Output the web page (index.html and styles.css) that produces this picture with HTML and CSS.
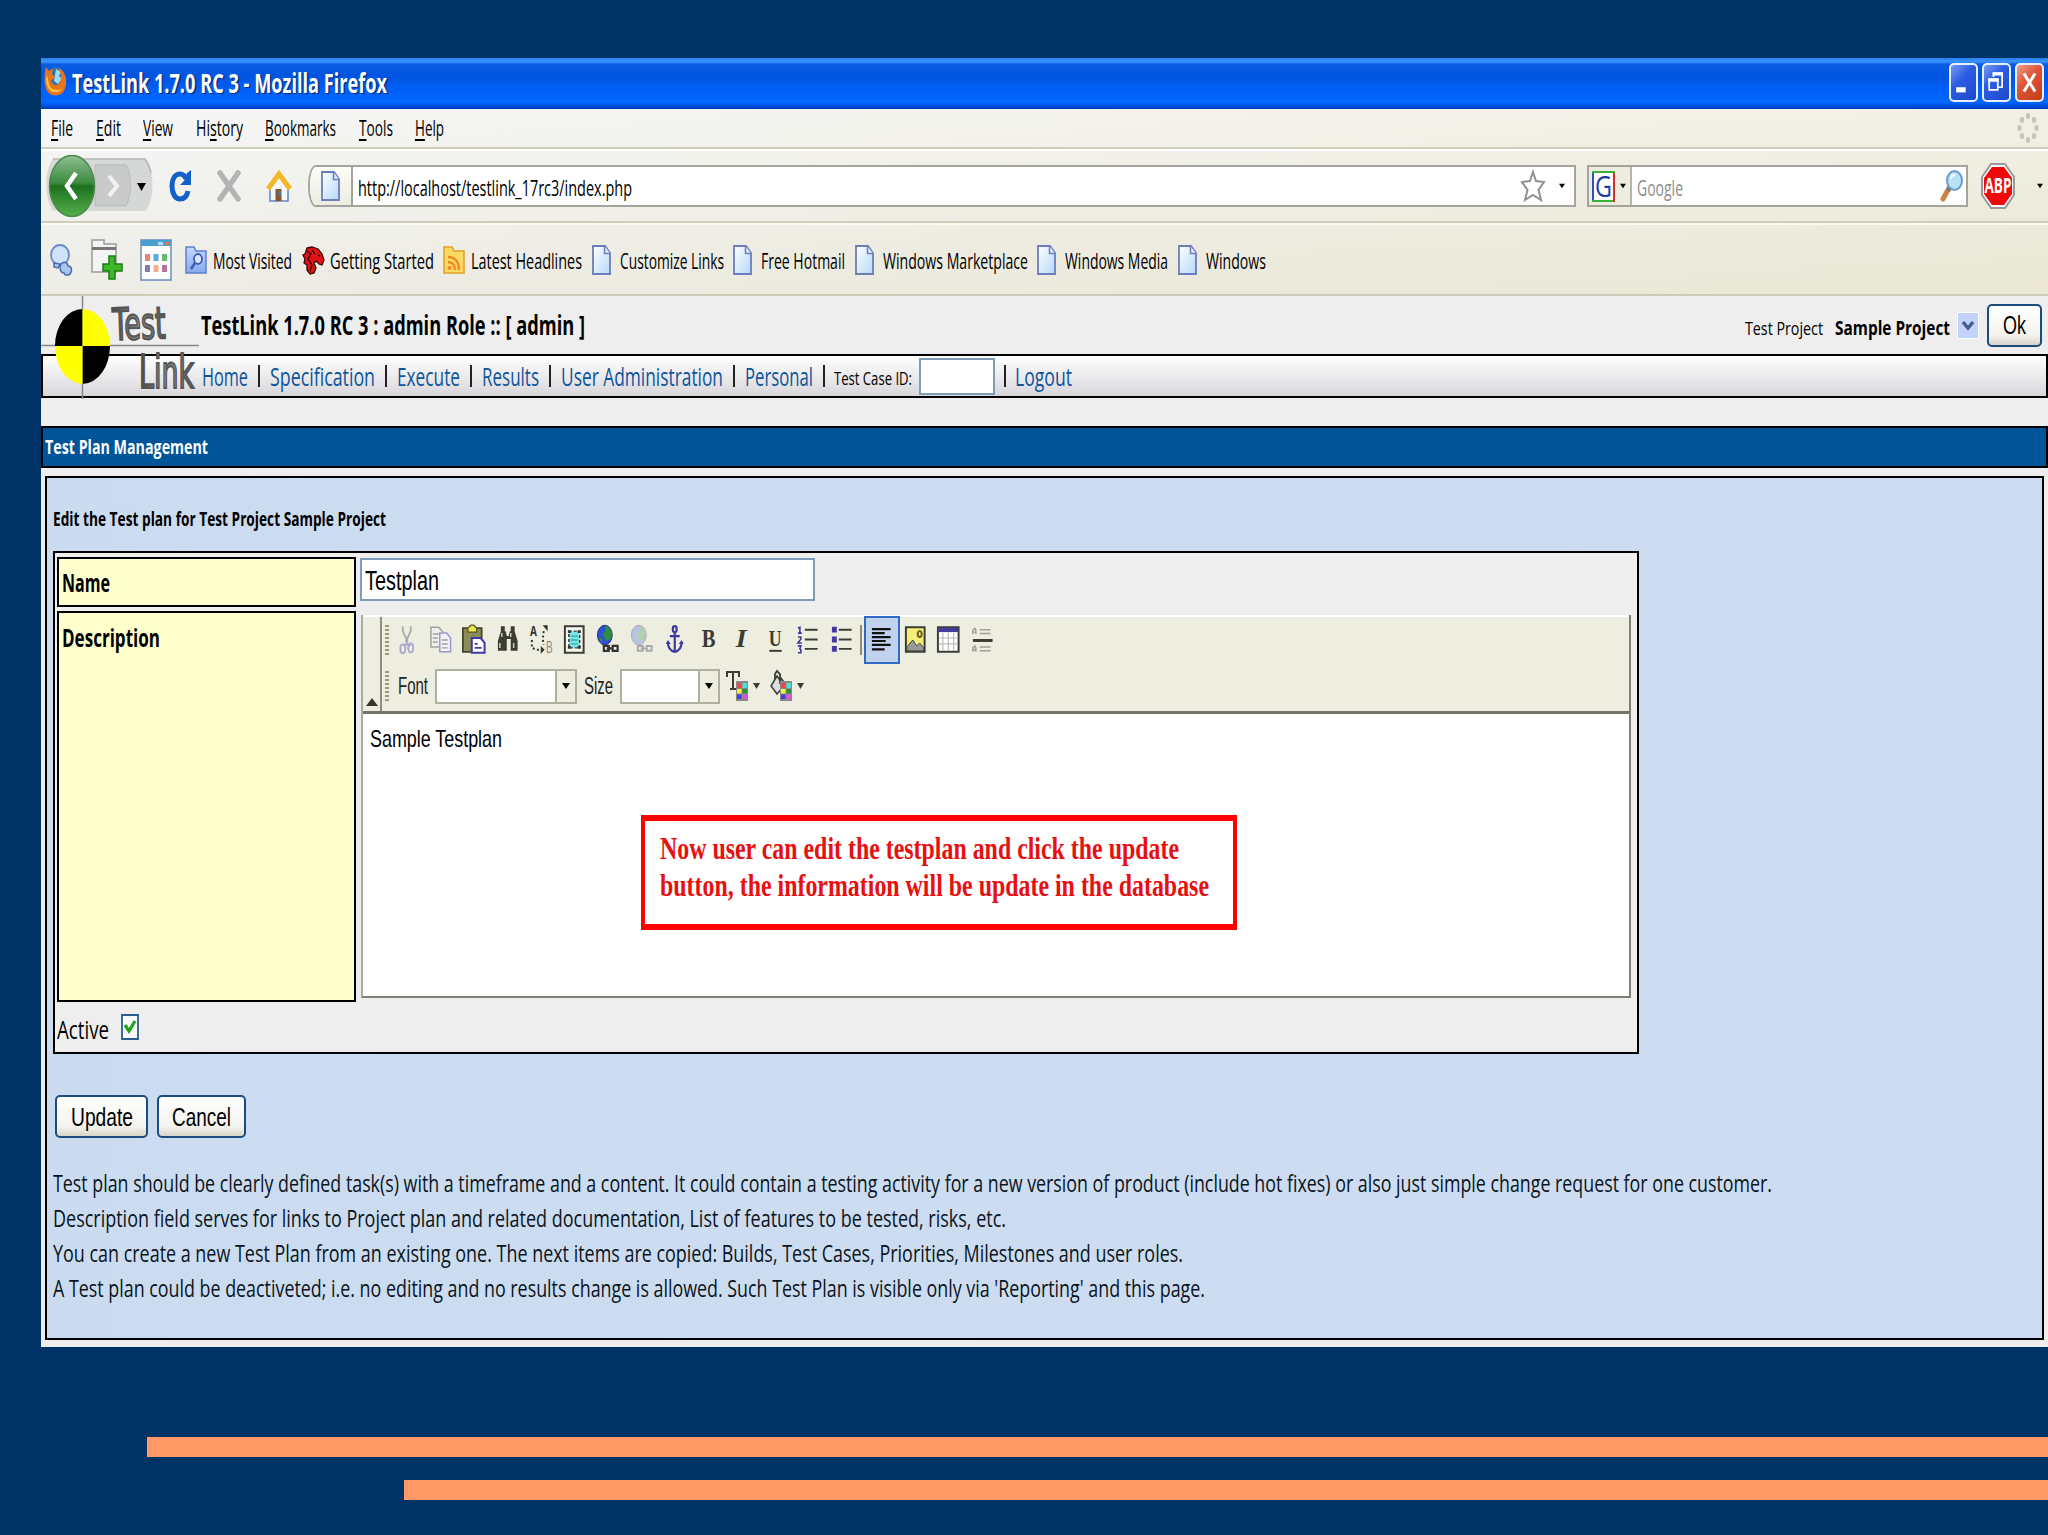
FILE: index.html
```
<!DOCTYPE html>
<html lang="en">
<head>
    <meta charset="utf-8">
    <title>TestLink 1.7.0 RC 3</title>
    <link rel="stylesheet" href="styles.css">
</head>
<body>
    <svg class="defs" width="0" height="0">
        <defs>
            <linearGradient id="paper" x1="0" y1="0" x2="1" y2="1">
                <stop offset="0" stop-color="#fff"/><stop offset="1" stop-color="#b4d8fb"/>
            </linearGradient>
            <linearGradient id="green" x1="0" y1="0" x2="0" y2="1">
                <stop offset="0" stop-color="#8fbf92"/><stop offset=".45" stop-color="#3c8a3f"/><stop offset=".5" stop-color="#1d701f"/><stop offset="1" stop-color="#55b04c"/>
            </linearGradient>
            <linearGradient id="folder" x1="0" y1="0" x2="0" y2="1">
                <stop offset="0" stop-color="#c4d8fb"/><stop offset="1" stop-color="#86a9ee"/>
            </linearGradient>
            <linearGradient id="steel" x1="0" y1="0" x2="1" y2="0">
                <stop offset="0" stop-color="#444"/><stop offset=".5" stop-color="#8a8a8a"/><stop offset="1" stop-color="#555"/>
            </linearGradient>
        </defs>
        <symbol id="page" viewBox="0 0 19 30">
            <path d="M1 1h12l5 7v21H1z" fill="url(#paper)" stroke="#6c7cbc" stroke-width="1.8"/>
            <path d="M12.500 1v7.500H18" fill="#dcebff" stroke="#6c7cbc" stroke-width="1.500"/>
        </symbol>
        <symbol id="palette" viewBox="0 0 12 20">
            <path d="M0 0h12v20H0z" fill="#888"/>
            <path d="M1 2h4.500v5H1z" fill="#e84848"/><path d="M6.500 2H11v5H6.500z" fill="#50dcd8"/>
            <path d="M1 8h4.500v4.500H1z" fill="#f8f040"/><path d="M6.500 8H11v4.500H6.500z" fill="#289038"/>
            <path d="M1 13.500h4.500V18H1z" fill="#4040d8"/><path d="M6.500 13.500H11V18H6.500z" fill="#e050d8"/>
        </symbol>
        <symbol id="down" viewBox="0 0 8 6"><path d="M0 0h8L4 6z"/></symbol>
    </svg>

    <div class="window">
        <div class="titlebar">
            <svg class="firefox" width="23" height="30" viewBox="0 0 23 30">
                <ellipse cx="12" cy="14" rx="10" ry="13" fill="#2b6fb4"/>
                <path d="M12 3l5 3-2 4 3 3-4 5-4-3z" fill="#9adcf0"/>
                <path d="M2 1l3 4 4-2-1 5 3 3-4 4c2 5 7 5 9 1 2-4 1-10-2-14 9 3 10 16 6 23-4 6-13 6-17 0C0 19 0 8 2 1z" fill="#e8741c"/>
                <path d="M3 9c-2 6 0 13 4 16 4 2 8 2 11-2-5 2-12 1-13-5z" fill="#f9c440"/>
            </svg>
            <span class="fit title" data-w="315">TestLink 1.7.0 RC 3 - Mozilla Firefox</span>
            <div class="controls">
                <svg class="ctl" viewBox="0 0 29 39"><path d="M6 25h11v6H6z" fill="#fff"/></svg>
                <svg class="ctl" viewBox="0 0 29 39"><path d="M11 13V9h10v16h-4M6 16h10v12H6z" fill="none" stroke="#fff" stroke-width="2"/><path d="M10 9.500h12M5 16.500h12" stroke="#fff" stroke-width="4"/></svg>
                <svg class="ctl close" viewBox="0 0 29 39"><path d="M8 9l13 21M21 9L8 30" stroke="#fff" stroke-width="3.500"/></svg>
            </div>
        </div>

        <div class="chrome">
            <div class="menubar">
                <span class="fit" data-w="22"><u>F</u>ile</span>
                <span class="fit" data-w="25"><u>E</u>dit</span>
                <span class="fit" data-w="30"><u>V</u>iew</span>
                <span class="fit" data-w="47">Hi<u>s</u>tory</span>
                <span class="fit" data-w="71"><u>B</u>ookmarks</span>
                <span class="fit" data-w="34"><u>T</u>ools</span>
                <span class="fit" data-w="29"><u>H</u>elp</span>
                <svg class="throbber" width="22" height="30" viewBox="0 0 22 30" fill="#c6c4b6">
                    <ellipse cx="11" cy="3" rx="2.200" ry="3"/><ellipse cx="17" cy="7" rx="2.200" ry="3"/><ellipse cx="19.500" cy="15" rx="2.200" ry="3"/><ellipse cx="17" cy="23" rx="2.200" ry="3"/>
                    <ellipse cx="11" cy="27" rx="2.200" ry="3"/><ellipse cx="5" cy="23" rx="2.200" ry="3"/><ellipse cx="2.500" cy="15" rx="2.200" ry="3"/><ellipse cx="5" cy="7" rx="2.200" ry="3"/>
                </svg>
            </div>

            <div class="navbar">
                <svg class="backforward" width="108" height="64" viewBox="0 0 108 64">
                    <path d="M8 5h92c10 12 10 42 0 52H8C-1 44-1 16 8 5z" fill="#d6d8d8"/>
                    <path d="M8 5h92c3 4 5 9 6 14" fill="none" stroke="#b4b6b6" stroke-width="1.500"/>
                    <path d="M50 11h31c6 10 6 31 0 41H50z" fill="#c9cbcb" stroke="#b8baba"/>
                    <path d="M64 22l8 10-8 10" fill="none" stroke="#f2f2f2" stroke-width="4"/>
                    <ellipse cx="27" cy="32" rx="22.500" ry="30.500" fill="url(#green)" stroke="#4c8a4e" stroke-width="1.500"/>
                    <path d="M31 19L22 32l9 13" fill="none" stroke="#fff" stroke-width="4.500"/>
                    <path d="M92 29h9l-4.500 8z" fill="#000"/>
                </svg>
                <svg width="23" height="32" viewBox="0 0 23 32">
                    <path d="M19 21c-1 5-4 8-8 8-5 0-8-6-8-13S6 4 11 4c3 0 5 2 6 5" fill="none" stroke="#1560c8" stroke-width="5"/>
                    <path d="M22 0v15H11l4-4 3-8z" fill="#1560c8"/>
                </svg>
                <svg width="24" height="32" viewBox="0 0 24 32"><path d="M3 3l18 26M21 3L3 29" stroke="#b4b4b4" stroke-width="5.500" stroke-linecap="round"/></svg>
                <svg width="26" height="32" viewBox="0 0 26 32">
                    <path d="M4 16v15h18V16l-9-11z" fill="#f4f8fd" stroke="#5f86c4" stroke-width="1.500"/>
                    <path d="M9.500 19h6v12h-6z" fill="#8a5424"/><path d="M12 21h3v5h-3z" fill="#57738e"/>
                    <path d="M2 19L13 4l11 15" fill="none" stroke="#f4b728" stroke-width="5"/>
                </svg>
                <div class="urlbar">
                    <div class="favicon"><svg width="19" height="30"><use href="#page"/></svg></div>
                    <span class="fit url" data-w="274">http://localhost/testlink_17rc3/index.php</span>
                    <svg class="star" width="24" height="32" viewBox="0 0 24 32"><path d="M12 2l3 9 8 1-5.500 8L20 30l-8-5-8 5 2.500-10L1 12l8-1z" fill="#fff" stroke="#909090" stroke-width="2"/></svg>
                    <svg width="6" height="6"><use href="#down"/></svg>
                </div>
                <div class="search">
                    <div class="engine">
                        <svg width="23" height="31" viewBox="0 0 23 31">
                            <path d="M0 0h23v31H0z" fill="#fff"/><path d="M0 1h23M0 30h22" stroke="#3cb03c" stroke-width="2"/>
                            <path d="M1 2v27" stroke="#2a50c8" stroke-width="2"/><path d="M22 2v29" stroke="#d82c2c" stroke-width="2"/>
                            <text x="3" y="26" font-size="29" textLength="17" lengthAdjust="spacingAndGlyphs" fill="#1c3ca8">G</text>
                        </svg>
                        <svg width="6" height="6"><use href="#down"/></svg>
                    </div>
                    <span class="fit hint" data-w="46">Google</span>
                    <svg class="lens" width="23" height="32" viewBox="0 0 23 32">
                        <path d="M9 18L3 29" stroke="#c8853c" stroke-width="5" stroke-linecap="round"/>
                        <path d="M10 17l-2 4" stroke="#777" stroke-width="4"/>
                        <ellipse cx="14.500" cy="10.500" rx="7.500" ry="9.500" fill="#b8e2f8" stroke="#6a9cd0" stroke-width="2"/>
                        <path d="M11 9c0-3 2-4 4-4" stroke="#fff" stroke-width="2" fill="none"/>
                    </svg>
                </div>
                <svg class="abp" width="34" height="46" viewBox="0 0 34 46">
                    <path d="M10 1h14l9 13v18l-9 13H10L1 32V14z" fill="#fff" stroke="#999" stroke-width="2"/>
                    <path d="M11 4h12l8 11v16l-8 11H11L3 31V15z" fill="#ee0a0a"/>
                    <text x="3.500" y="30" font-size="21" font-weight="700" textLength="27" lengthAdjust="spacingAndGlyphs" fill="#fff">ABP</text>
                </svg>
                <svg class="more" width="6" height="6"><use href="#down"/></svg>
            </div>

            <div class="bookmarks">
                <svg width="23" height="32" viewBox="0 0 23 32">
                    <ellipse cx="11" cy="11" rx="9" ry="10" fill="#cfe2fb" stroke="#6a8cc4" stroke-width="1.800"/>
                    <path d="M5 19l6 1-2 4-4-1zM12 20c4-4 7 0 7 2 4 0 4 5 3 6-1 4-6 4-7 1-4 0-5-6-3-9z" fill="#a8c6f2" stroke="#4a6cac" stroke-width="1.500"/>
                </svg>
                <svg class="newtab" width="32" height="42" viewBox="0 0 32 42">
                    <path d="M1 9V1h12v4h12v28H1z" fill="#f4f4f4" stroke="#999" stroke-width="1.500"/>
                    <path d="M1 8h24v3H1z" fill="#777"/>
                    <path d="M18 17h6v8h7v7h-7v8h-6v-8h-6v-7h6z" fill="#3cb828" stroke="#1c7c14" stroke-width="1.500"/>
                </svg>
                <svg class="speed" width="32" height="42" viewBox="0 0 32 42">
                    <path d="M1 1h30v40H1z" fill="#fff" stroke="#6a8cc0" stroke-width="1.500"/><path d="M1 1h30v6H1z" fill="#48a0d0"/>
                    <path d="M25 3h4v3h-4z" fill="#e87050"/><path d="M18 3h5v3h-5z" fill="#b8dcf0"/>
                    <path d="M5 15h5v7H5z" fill="#f08078"/><path d="M13.500 15h5v7h-5z" fill="#60a8e0"/><path d="M22 15h5v7h-5z" fill="#68b870"/>
                    <path d="M5 26h5v7H5z" fill="#8878b0"/><path d="M13.500 26h5v7h-5z" fill="#f4b08c"/><path d="M22 26h5v7h-5z" fill="#b870a0"/>
                </svg>
                <a class="bookmark">
                    <svg width="22" height="28" viewBox="0 0 22 28">
                        <path d="M1 1h8l2 4h10v22H1z" fill="url(#folder)" stroke="#5c80d0" stroke-width="1.500"/>
                        <ellipse cx="13" cy="13" rx="4" ry="5" fill="#dce8ff" stroke="#3c5cb4" stroke-width="1.800"/><path d="M10 17l-4 6" stroke="#3c5cb4" stroke-width="2.500"/>
                    </svg>
                    <span class="fit" data-w="79">Most Visited</span>
                </a>
                <a class="bookmark">
                    <svg width="22" height="28" viewBox="0 0 22 28">
                        <path d="M5 2l5-1 6 2 4 5 2 6-2 5-3-1-3-3-2 2 2 5-2 5-4 1-3-4 0-5-3-2 1-4-2-4 2-1z" fill="#e01414" stroke="#3c0606" stroke-width="1.300"/>
                        <path d="M5 5l4 3-3 5 4 6-2 6M10 4l3 4M16 9l2 1" stroke="#500" fill="none" stroke-width="1.500"/>
                    </svg>
                    <span class="fit" data-w="104">Getting Started</span>
                </a>
                <a class="bookmark">
                    <svg width="22" height="28" viewBox="0 0 22 28">
                        <path d="M1 1h8l2 4h10v22H1z" fill="#fcd864" stroke="#e0a020" stroke-width="1.500"/>
                        <path d="M5 11c7 0 11 5 11 13M5 16c4 0 7 3 7 8" fill="none" stroke="#ee8a1c" stroke-width="2.500"/><circle cx="6.500" cy="22" r="2" fill="#ee8a1c"/>
                    </svg>
                    <span class="fit" data-w="111">Latest Headlines</span>
                </a>
                <a class="bookmark page"><svg width="19" height="30"><use href="#page"/></svg><span class="fit" data-w="104">Customize Links</span></a>
                <a class="bookmark page"><svg width="19" height="30"><use href="#page"/></svg><span class="fit" data-w="84">Free Hotmail</span></a>
                <a class="bookmark page"><svg width="19" height="30"><use href="#page"/></svg><span class="fit" data-w="145">Windows Marketplace</span></a>
                <a class="bookmark page"><svg width="19" height="30"><use href="#page"/></svg><span class="fit" data-w="103">Windows Media</span></a>
                <a class="bookmark page"><svg width="19" height="30"><use href="#page"/></svg><span class="fit" data-w="60">Windows</span></a>
            </div>
        </div>

        <div class="content">
            <svg class="logo" width="160" height="103" viewBox="0 0 160 103">
                <path d="M41.500 0v103M0 49.500h158" stroke="#888" stroke-width="1.500"/>
                <path d="M41.500 50V13A27.500 37 0 0 0 14 50zM41.500 50v38A27.500 38 0 0 0 69 50z" fill="#000"/>
                <path d="M41.500 50V13A27.500 37 0 0 1 69 50zM41.500 50v38A27.500 38 0 0 1 14 50z" fill="#ff0"/>
                <text x="72" y="44" font-size="44" textLength="53" lengthAdjust="spacingAndGlyphs" transform="rotate(-2 72 44)">Test</text>
                <text x="98" y="92" font-size="46" textLength="55" lengthAdjust="spacingAndGlyphs">Link</text>
            </svg>
            <div class="header">
                <span class="fit product" data-w="384">TestLink 1.7.0 RC 3 : admin Role :: [ admin ]</span>
                <div class="project">
                    <span class="fit" data-w="78">Test Project</span>
                    <span class="fit current" data-w="115">Sample Project</span>
                    <svg width="22" height="27" viewBox="0 0 22 27"><path d="M0 0h22v27H0z" fill="#fff"/><path d="M1 1h20v25H1z" fill="#c2d2fa"/><path d="M6 10l5 6 5-6" fill="none" stroke="#44608c" stroke-width="3.500"/></svg>
                    <button class="btn ok"><span class="fit" data-w="23">Ok</span></button>
                </div>
            </div>
            <div class="menu">
                <a class="fit" data-w="46">Home</a><i></i>
                <a class="fit" data-w="105">Specification</a><i></i>
                <a class="fit" data-w="63">Execute</a><i></i>
                <a class="fit" data-w="57">Results</a><i></i>
                <a class="fit" data-w="162">User Administration</a><i></i>
                <a class="fit" data-w="68">Personal</a><i></i>
                <span class="fit small" data-w="78">Test Case ID:</span>
                <div class="tcid"></div><i></i>
                <a class="fit" data-w="57">Logout</a>
            </div>

            <h1><span class="fit" data-w="163">Test Plan Management</span></h1>

            <div class="workback">
                <h2><span class="fit" data-w="333">Edit the Test plan for Test Project Sample Project</span></h2>
                <div class="form">
                    <div class="th name"><span class="fit" data-w="48">Name</span></div>
                    <div class="field"><span class="fit" data-w="74">Testplan</span></div>
                    <div class="th desc"><span class="fit" data-w="98">Description</span></div>
                    <div class="editor">
                        <div class="toolbar">
                            <div class="collapse"><svg width="12" height="8" viewBox="0 0 12 8"><path d="M6 0l6 8H0z" fill="#3a3428"/></svg></div>
                            <div class="tools">
                                <div class="toolrow first">
                                    <b class="grip"></b>
                                    <svg class="tool" viewBox="0 0 34 46"><g fill="none" stroke="#a8a8a8" stroke-width="1.800"><path d="M13 9v5l5 11M21 9v5l-5 11"/><g stroke="#a8a4cc"><path d="M17 22v5l-3 2M17 27l4 2"/><ellipse cx="13" cy="32" rx="2.500" ry="4.500"/><ellipse cx="21" cy="31" rx="2.500" ry="4.500"/></g></g></svg>
                                    <svg class="tool" viewBox="0 0 34 46"><path d="M7 10h8l4 5v15H7z" fill="#eee" stroke="#a0a0a0" stroke-width="1.500"/><path d="M9 17h6M9 21h5M9 25h5" stroke="#a0a0a0" stroke-width="1.500"/><path d="M16 16h7l4 5v14H16z" fill="#f2f2fa" stroke="#9c98cc" stroke-width="1.500"/><path d="M18 23h6M18 27h6M18 31h6" stroke="#a0a0a0" stroke-width="1.500"/></svg>
                                    <svg class="tool" viewBox="0 0 34 46"><path d="M6 11h19v24H6z" fill="#8c8c58" stroke="#44442c" stroke-width="1.800"/><path d="M11 15v-4l3-3h3l3 3v4z" fill="#e8e848" stroke="#555520" stroke-width="1.300"/><path d="M15 21h9l4 5v10H15z" fill="#fff" stroke="#4038a0" stroke-width="2"/><path d="M18 27h3M18 31h7" stroke="#4038a0" stroke-width="1.800"/></svg>
                                    <svg class="tool" viewBox="0 0 34 46"><path d="M10 9h4v5h1l1 5h2l1-5h1V9h4v5l3 10v10h-7V22h-4v12H7V24l3-10z" fill="#3c3c32"/><path d="M11 16v4M9 26v5M20 16v4M23 26v5" stroke="#ccc" stroke-width="1.500"/></svg>
                                    <svg class="tool" viewBox="0 0 34 46"><text x="6" y="19" font-size="15" font-weight="700" textLength="7" lengthAdjust="spacingAndGlyphs" fill="#333">A</text><text x="22" y="36" font-size="17" textLength="7" lengthAdjust="spacingAndGlyphs" fill="#888">B</text><path d="M8 23v8l5 2h3M20 14l-1 8 1 6" stroke="#333" stroke-width="2" stroke-dasharray="2 2.500" fill="none"/><path d="M17 29l4 4-4 4zM19 8h5v6z" fill="#333"/></svg>
                                    <svg class="tool" viewBox="0 0 34 46"><path d="M7 9h19v27H7z" fill="#f8f8f0" stroke="#3c3c34" stroke-width="2"/><path d="M11 14h11v17H11z" fill="#7ce4e4" stroke="#3c3c34" stroke-width="1.500" stroke-dasharray="3 2"/><path d="M10 13h3v3h-3zM20 13h3v3h-3zM10 29h3v3h-3zM20 29h3v3h-3z" fill="#333"/><path d="M13 19h7M13 23h7M13 27h7" stroke="#3aa" stroke-width="1.300"/></svg>
                                    <svg class="tool" viewBox="0 0 34 46"><ellipse cx="14" cy="18" rx="7.500" ry="10" fill="#2c50d8" stroke="#336" stroke-width="1"/><path d="M14 9c7 0 8 8 6 13l-5 2-3-7 3-4zM8 20l4 2-1 4z" fill="#2c9040"/><path d="M13 29h5v5h-5zM22 29h5v5h-5zM16 31.500h7" fill="#eee" stroke="#333" stroke-width="2.200"/></svg>
                                    <svg class="tool" viewBox="0 0 34 46"><ellipse cx="14" cy="18" rx="7.500" ry="10" fill="#b8c4e4" stroke="#aab" stroke-width="1"/><path d="M14 9c7 0 8 8 6 13l-5 2-3-7 3-4zM8 20l4 2-1 4z" fill="#b4d0b0"/><path d="M13 29h5v5h-5zM22 29h5v5h-5zM16 31.500h7" fill="#eee" stroke="#aaa" stroke-width="2"/></svg>
                                    <svg class="tool" viewBox="0 0 34 46"><g fill="none" stroke="#3c38a0" stroke-width="2.200"><ellipse cx="17" cy="12" rx="2" ry="3"/><path d="M17 15v20M12 19h10M10 25c0 6 3 9 7 10 4-1 7-4 7-10"/></g><path d="M8 27l2-4 3 4zM21 27l3-4 2 4z" fill="#3c38a0"/></svg>
                                    <svg class="tool" viewBox="0 0 34 46"><text class="serif" x="10" y="30" font-size="26" font-weight="700" textLength="14" lengthAdjust="spacingAndGlyphs">B</text></svg>
                                    <svg class="tool" viewBox="0 0 34 46"><text class="serif" x="11" y="30" font-size="26" font-weight="700" font-style="italic" textLength="11" lengthAdjust="spacingAndGlyphs">I</text></svg>
                                    <svg class="tool" viewBox="0 0 34 46"><text class="serif" x="10" y="29" font-size="24" font-weight="700" textLength="13" lengthAdjust="spacingAndGlyphs">U</text><path d="M10.500 34h12.500" stroke="#3c3c34" stroke-width="2"/></svg>
                                    <svg class="tool" viewBox="0 0 34 46"><path d="M13 12.500h13M13 22.500h13M13 32h13" stroke="#3c3c34" stroke-width="2"/><path d="M6 11l2-1v6M6 16h4M6 20h3v2l-3 4h4M6 29h3l-1 3 1 1v3H6" fill="none" stroke="#3c38a0" stroke-width="1.600"/></svg>
                                    <svg class="tool" viewBox="0 0 34 46"><path d="M13 12.500h13M13 22.500h13M13 32h13" stroke="#3c3c34" stroke-width="2"/><path d="M6 9.500h5v6H6zM6 19.500h5v6H6zM6 29h5v6H6z" fill="#4438a4"/></svg>
                                    <b class="sep"></b>
                                    <svg class="tool on" viewBox="0 0 34 46"><path d="M7 12h19M7 16h13M7 20h19M7 24h14M7 28h19M7 32.500h13" stroke="#111" stroke-width="2.200"/></svg>
                                    <svg class="tool" viewBox="0 0 34 46"><path d="M7 10h19v25H7z" fill="#f4ee78" stroke="#3c3c34" stroke-width="2"/><ellipse cx="21" cy="17" rx="2" ry="3" fill="none" stroke="#666020" stroke-width="2"/><path d="M8 34v-4l6-7 4 6 3-3 4 5v3z" fill="#999" stroke="#444" stroke-width="1"/></svg>
                                    <svg class="tool" viewBox="0 0 34 46"><path d="M6 10h21v25H6z" fill="#fff" stroke="#3c3c34" stroke-width="2"/><path d="M6.500 10.500h20V15h-20z" fill="#443c9c"/><path d="M11 16v18M16.500 16v18M22 16v18M7 21h19M7 27h19" stroke="#bbb" stroke-width="1.200"/></svg>
                                    <svg class="tool" viewBox="0 0 34 46"><path d="M14 12.500h11M14 16.500h11M14 30h11M14 34h11M7 17v-4l2-2 1 2v4M7 15h3M7 35v-4l2-2 1 2v4M7 33h3" fill="none" stroke="#a0a098" stroke-width="1.500"/><path d="M7 23.500h20" stroke="#3c3c34" stroke-width="3"/></svg>
                                </div>
                                <div class="toolrow">
                                    <b class="grip"></b>
                                    <span class="fit label" data-w="30">Font</span>
                                    <div class="combo font"><span><svg width="8" height="6"><use href="#down"/></svg></span></div>
                                    <span class="fit label" data-w="29">Size</span>
                                    <div class="combo size"><span><svg width="8" height="6"><use href="#down"/></svg></span></div>
                                    <svg class="color" width="35" height="32" viewBox="0 0 35 32"><path d="M1 7V2h12v5M7 2v17M4 19h7" fill="none" stroke="#3c3c34" stroke-width="2"/><use href="#palette" x="10" y="11" width="12" height="20"/><path d="M27 13h7l-3.500 6z" fill="#3c3c34"/></svg>
                                    <svg class="color" width="35" height="32" viewBox="0 0 35 32"><path d="M7 6L1 16l6 8 7-8z" fill="#ddd" stroke="#3c3c34" stroke-width="1.500"/><path d="M5 9V4l2-3 3 3v10M10 7l6 8" fill="none" stroke="#3c3c34" stroke-width="1.800"/><use href="#palette" x="10" y="11" width="12" height="20"/><path d="M27 13h7l-3.500 6z" fill="#3c3c34"/></svg>
                                </div>
                            </div>
                        </div>
                        <div class="textarea">
                            <span class="fit" data-w="132">Sample Testplan</span>
                            <div class="callout">
                                <div><span class="fit" data-w="519">Now user can edit the testplan and click the update</span></div>
                                <div><span class="fit" data-w="549">button, the information will be update in the database</span></div>
                            </div>
                        </div>
                    </div>
                    <div class="active">
                        <span class="fit" data-w="52">Active</span>
                        <svg width="18" height="26" viewBox="0 0 18 26"><path d="M1 1h16v24H1z" fill="#f8faf8" stroke="#2c5c8c" stroke-width="1.800"/><path d="M4 11l4 6 6-10" fill="none" stroke="#22a022" stroke-width="3.200"/></svg>
                    </div>
                </div>
                <div class="buttons">
                    <button class="btn update"><span class="fit" data-w="62">Update</span></button>
                    <button class="btn cancel"><span class="fit" data-w="59">Cancel</span></button>
                </div>
                <p>
                    <span class="fit" data-w="1719">Test plan should be clearly defined task(s) with a timeframe and a content. It could contain a testing activity for a new version of product (include hot fixes) or also just simple change request for one customer.</span>
                    <span class="fit" data-w="953">Description field serves for links to Project plan and related documentation, List of features to be tested, risks, etc.</span>
                    <span class="fit" data-w="1130">You can create a new Test Plan from an existing one. The next items are copied: Builds, Test Cases, Priorities, Milestones and user roles.</span>
                    <span class="fit" data-w="1152">A Test plan could be deactiveted; i.e. no editing and no results change is allowed. Such Test Plan is visible only via 'Reporting' and this page.</span>
                </p>
            </div>
        </div>
    </div>

    <div class="stripe"></div>
    <div class="stripe short"></div>

    <script src="fit.js"></script>
</body>
</html>
```

FILE: styles.css
```
* {
    box-sizing: border-box;
}

body {
    margin: 0;
    padding: 58px 0 0 41px;
    height: 1535px;
    overflow: hidden;
    background: #003366;
    font-family: "Open Sans", "Noto Sans", sans-serif;
    color: #000;
}

svg {
    display: block;
    flex: none;
    overflow: visible;
}

.defs {
    position: absolute;
}

/* narrow text, squeezed to the width in data-w */
.fit {
    display: inline-block;
    flex: none;
    white-space: nowrap;
    transform-origin: 0 50%;
}

.window {
    height: 1289px;
    background: #eeeeef;
}

/* title bar */
.titlebar {
    display: flex;
    align-items: center;
    height: 51px;
    padding-left: 3px;
    background: linear-gradient(#2a80f4 0, #3a94ff 4px, #0a5ce4 6px, #0054e0 18px, #0060f8 32px, #0068ff 44px, #0050e0 48px, #0038b8 51px);
}

.firefox {
    margin-bottom: 6px;
}

.title {
    margin: 0 0 2px 5px;
    font-size: 26px;
    font-weight: 700;
    line-height: 30px;
    color: #fff;
    text-shadow: 2px 1px 1px #0a2a80;
}

.controls {
    display: flex;
    gap: 4px;
    margin-left: auto;
    padding: 0 4px 3px 0;
}

.ctl {
    width: 29px;
    height: 39px;
    border: 2px solid #e8eefc;
    border-radius: 5px;
    background: linear-gradient(135deg, #7a9cf4, #2c5ce4 40%, #1c48cc);
}

.ctl.close {
    background: linear-gradient(135deg, #f0a08c, #e0563a 40%, #c43c18);
}

/* browser toolbars */
.chrome {
    height: 187px;
    background: linear-gradient(rgba(255, 255, 255, 0.3), rgba(230, 226, 204, 0.35)), linear-gradient(to right, #f1f2f4, #efeee6 45%, #ecead9);
    border-bottom: 2px solid #cccbb8;
    font-size: 21px;
}

.menubar {
    display: flex;
    align-items: center;
    gap: 22.500px;
    height: 40px;
    padding: 0 9px 0 10px;
    border-bottom: 2px solid #cfcdba;
    line-height: 30px;
}

.menubar u {
    text-decoration-thickness: 1.500px;
    text-underline-offset: 3px;
}

.throbber {
    margin-left: auto;
}

.navbar {
    display: flex;
    align-items: center;
    height: 74px;
    padding: 0 5px 0 4px;
    border-top: 2px solid #fff;
    border-bottom: 2px solid #cfcdba;
    line-height: 30px;
}

.navbar > svg {
    margin-right: 25px;
}

.navbar > svg.backforward {
    margin-right: 16px;
}

.navbar > svg:nth-child(4) {
    margin-right: 16px;
}

.urlbar {
    display: flex;
    align-items: center;
    width: 1268px;
    height: 42px;
    padding-right: 9px;
    border: 2px solid #a4a49c;
    border-radius: 8px 0 0 8px / 20px 0 0 20px;
    background: #fff;
    overflow: hidden;
}

.url {
    margin-top: 3px;
}

.favicon {
    width: 43px;
    height: 38px;
    margin-right: 5px;
    padding: 4px 0 0 11px;
    border-right: 2px solid #a4a49c;
    background: linear-gradient(#fcfcf8, #ecece0);
}

.star {
    margin: 0 14px 0 auto;
}

.search {
    display: flex;
    align-items: center;
    width: 381px;
    height: 42px;
    margin: 0 13px 0 11px;
    border: 2px solid #a4a49c;
    background: #fff;
}

.engine {
    display: flex;
    align-items: center;
    gap: 5px;
    width: 43px;
    height: 38px;
    padding-left: 3px;
    border-right: 2px solid #b4b4a8;
    background: #ecece0;
}

.hint {
    margin: 3px 0 0 5px;
    color: #8c8c88;
}

.lens {
    margin: 0 3px 0 auto;
}

.navbar > .abp {
    margin-right: auto;
}

.navbar > .more {
    margin-right: 0;
}

.bookmarks {
    display: flex;
    align-items: center;
    height: 71px;
    padding-left: 8px;
    border-top: 2px solid #fbfaf2;
    line-height: 30px;
}

.newtab {
    margin-left: 19px;
}

.speed {
    margin: 0 13px 0 17px;
}

.bookmark {
    display: flex;
    align-items: center;
    gap: 6px;
    margin-right: 9.500px;
}

.bookmark.page {
    gap: 9px;
}

.bookmark .fit {
    margin-top: 2px;
}

/* application header */
.content {
    position: relative;
}

.logo {
    position: absolute;
    left: 0;
    top: 0;
}

.logo text {
    fill: url(#steel);
    stroke: #555;
    stroke-width: 2px;
    font-family: "DejaVu Sans", sans-serif;
    font-weight: 400;
}

.header {
    display: flex;
    align-items: center;
    justify-content: space-between;
    height: 58px;
    padding: 0 6px 0 160px;
}

.product {
    font-size: 26px;
    font-weight: 700;
    line-height: 36px;
}

.project {
    display: flex;
    align-items: center;
    font-size: 18px;
    line-height: 30px;
}

.project > .fit {
    margin-top: 5px;
}

.project > .current {
    margin: 5px 7px 0 12px;
    font-size: 20px;
    font-weight: 700;
}

.btn {
    display: flex;
    align-items: center;
    justify-content: center;
    height: 43px;
    padding: 0;
    border: 2px solid #1c4c7c;
    border-radius: 5px;
    background: linear-gradient(#fff, #f4f3ee 75%, #d8d4c8);
    font: 26px/30px "Liberation Sans", Arial, sans-serif;
    color: #000;
}

.ok {
    width: 55px;
    margin-left: 8px;
}

.update {
    width: 93px;
}

.cancel {
    width: 89px;
}

.menu {
    display: flex;
    align-items: center;
    gap: 10px;
    height: 44px;
    padding-left: 159px;
    border: 2px solid #000;
    background: linear-gradient(#fff, #d8d6da);
    font-size: 25px;
    line-height: 34px;
    color: #0d559c;
}

.menu i {
    width: 2px;
    height: 22px;
    background: #222;
}

.menu .small {
    font-size: 18px;
    color: #000;
    margin: 4px 0 0 -1px;
}

.tcid {
    width: 76px;
    height: 37px;
    margin: 0 -1px 0 -3px;
    border: 2px solid #7f9db9;
    background: #fff;
}

.menu .tcid + i {
    margin-right: -1px;
}

h1 {
    display: flex;
    align-items: center;
    height: 42px;
    margin: 28px 0 8px;
    padding-left: 2px;
    border: 2px solid #000;
    background: #005498;
    font-size: 20px;
    line-height: 30px;
    color: #fff;
}

/* edit form */
.workback {
    height: 864px;
    margin: 0 4px;
    padding: 26px 7px 0 6px;
    border: 2px solid #000;
    background: linear-gradient(to right, #ccdcf0, #cddcf2);
}

h2 {
    margin: 0 0 16px;
    font-size: 19px;
    line-height: 31px;
}

.form {
    display: grid;
    grid-template-columns: 299px 1271px;
    grid-template-rows: 50px 391px auto;
    gap: 4px;
    align-content: start;
    width: 1586px;
    height: 503px;
    padding: 4px 2px;
    border: 2px solid #000;
    background: #eeeeef;
    font-size: 25px;
    line-height: 36px;
}

.th {
    padding-left: 3px;
    border: 2px solid #000;
    background: #ffffcc;
    font-weight: 700;
}

.name {
    padding-top: 5px;
}

.desc {
    padding-top: 6px;
}

.field {
    width: 455px;
    height: 43px;
    margin-top: 1px;
    padding-left: 3px;
    border: 2px solid #7f9db9;
    background: #fff;
    font: 27px/42px "Liberation Sans", Arial, sans-serif;
}

.editor {
    width: 1270px;
    height: 383px;
    margin: 4px 0 0 1px;
    border: 1px solid #808078;
    border-width: 0 2px 2px;
    border-left-color: #aaa;
    background: #fff;
}

.toolbar {
    display: flex;
    height: 99px;
    border-top: 2px solid #fff;
    border-bottom: 3px solid #75746a;
    background: #eeeee0;
}

.collapse {
    display: flex;
    align-items: flex-end;
    width: 19px;
    padding: 0 0 5px 3px;
    border-right: 2px solid #8c8c80;
}

.tools {
    display: flex;
    flex-direction: column;
}

.toolrow {
    display: flex;
    align-items: center;
    height: 46px;
    padding-left: 3px;
}

.grip {
    width: 4px;
    height: 30px;
    background: repeating-linear-gradient(#9c9c78 0 2px, transparent 2px 4px);
}

.first .grip {
    margin-right: 1px;
}

.tool {
    width: 33.500px;
    height: 46px;
}

.tool .serif {
    font-family: "Liberation Serif", serif;
    fill: #3c3c34;
}

.tool.on {
    background: #c1d2ee;
    outline: 2px solid #316ac5;
    outline-offset: -1px;
}

.sep {
    width: 2px;
    height: 30px;
    margin: 0 3px 0 1px;
    background: #8c8c78;
}

.label {
    margin: 0 7px 0 9px;
    font-size: 23px;
    font-family: "Liberation Sans", Arial, sans-serif;
    color: #222;
}

.combo {
    display: flex;
    justify-content: flex-end;
    height: 35px;
    border: 2px solid #b0b0a0;
    background: #fff;
}

.combo span {
    display: flex;
    align-items: center;
    justify-content: center;
    width: 20px;
    border-left: 2px solid #b0b0a0;
    background: #eeeee0;
}

.combo.font {
    width: 142px;
    margin-right: -2px;
}

.combo.size {
    width: 100px;
}

.color {
    margin: 0 3px 0 6px;
}

.textarea {
    position: relative;
    padding: 8px 0 0 7px;
    font: 24px/34px "Liberation Sans", Arial, sans-serif;
}

/* note lying over the editor */
.callout {
    position: absolute;
    left: 278px;
    top: 101px;
    width: 596px;
    height: 115px;
    padding: 9px 0 0 15px;
    border: 4px solid #f00;
    border-width: 6px 4px;
    background: #fff;
    font: 700 31px/37px "Liberation Serif", serif;
    color: #e81010;
}

.active {
    display: flex;
    align-items: center;
    gap: 12px;
    height: 46px;
    grid-column: 1 / 3;
}

.active svg {
    margin-bottom: 5px;
}

.buttons {
    display: flex;
    gap: 9px;
    margin: 41px 0 27px 2px;
}

.workback p {
    display: flex;
    flex-direction: column;
    align-items: flex-start;
    margin: 0;
    font-size: 24px;
    line-height: 35px;
    color: #0a1420;
}

/* slide footer */
.stripe {
    height: 20px;
    margin: 90px 0 0 106px;
    background: #ff9966;
}

.stripe.short {
    margin: 23px 0 0 363px;
}
```

FILE: fit.js
```
// Squeeze every .fit text to the width given in data-w
document.querySelectorAll(".fit").forEach(function (el) {
    const target = parseFloat(el.dataset.w);
    const natural = el.getBoundingClientRect().width;
    const margin = parseFloat(getComputedStyle(el).marginRight) || 0;
    el.style.transform = "scaleX(" + target / natural + ")";
    el.style.marginRight = (margin + target - natural) + "px";
});
```
